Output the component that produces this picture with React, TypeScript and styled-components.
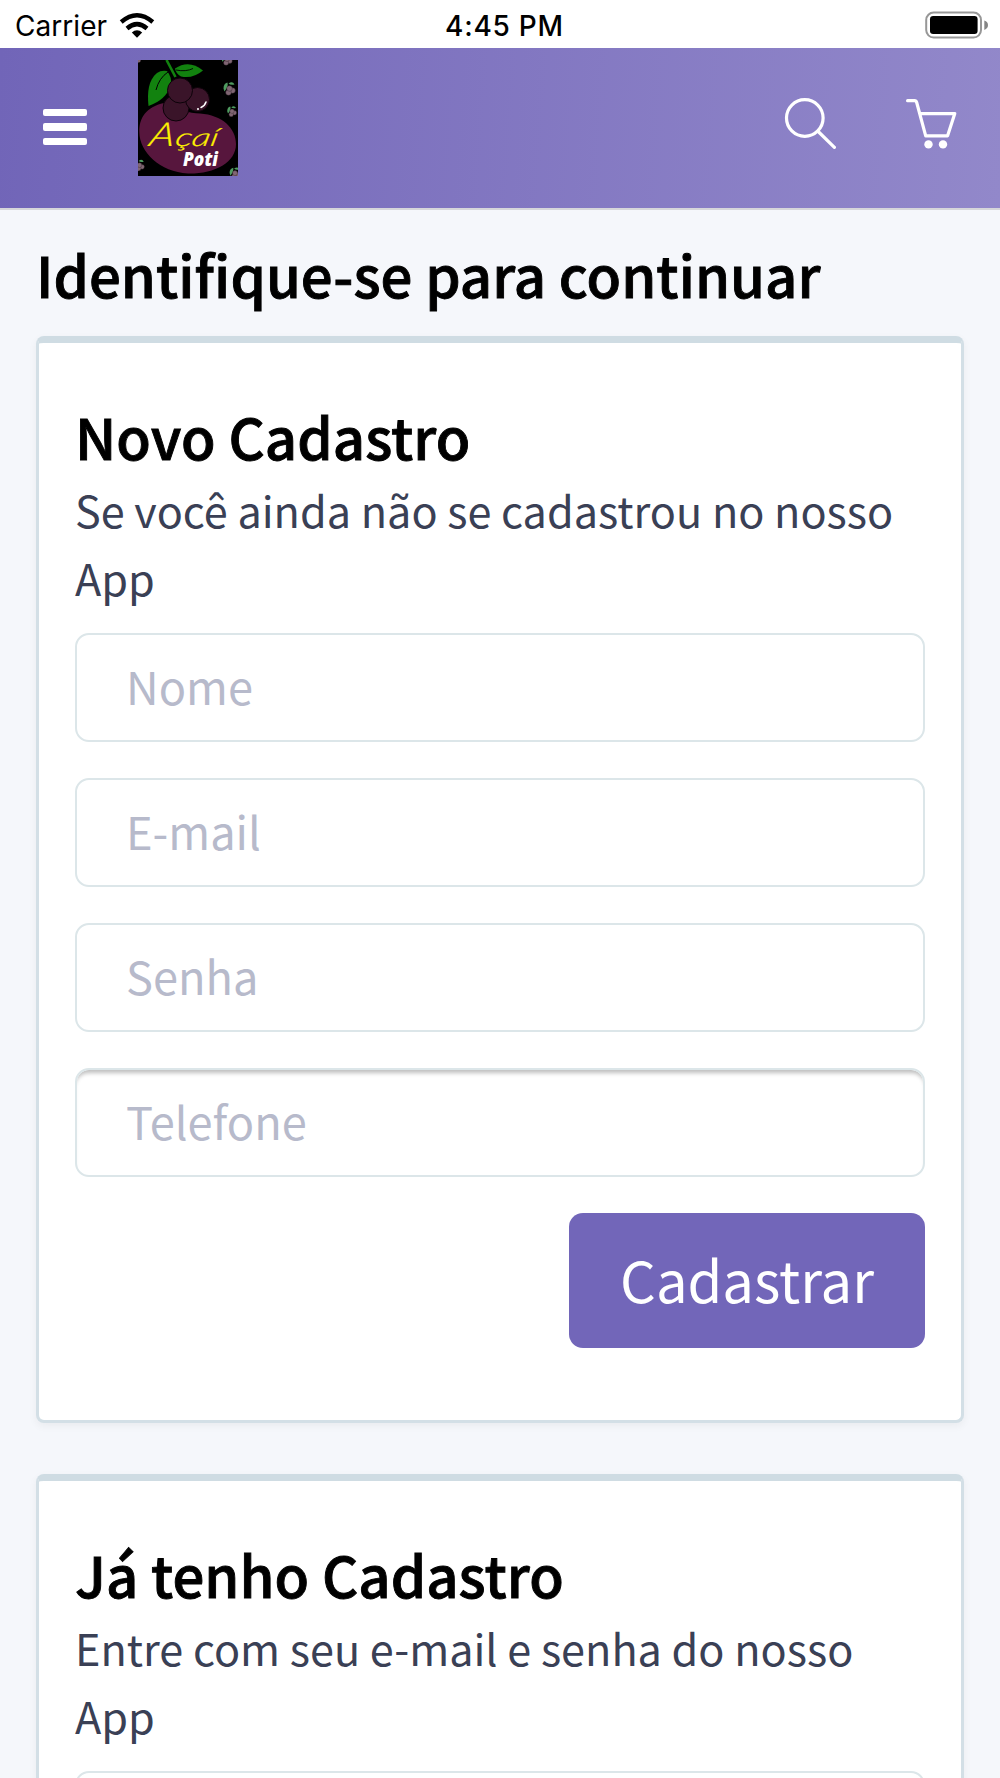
import React from "react";
import styled, { createGlobalStyle } from "styled-components";

const Global = createGlobalStyle`
  * { box-sizing: border-box; }
  html, body { margin: 0; padding: 0; }
  body {
    background: #f5f7fb;
    font-family: "Noto Sans CJK SC", "Source Sans Pro", sans-serif;
    height: 1778px;
    overflow: hidden;
  }
`;

const Screen = styled.div`
  width: 1000px;
  height: 1778px;
  overflow: hidden;
  background: #f5f7fb;
`;

const StatusBar = styled.div`
  display: grid;
  grid-template-columns: 1fr auto 1fr;
  align-items: center;
  height: 48px;
  padding: 0 11px 0 15px;
  background: #fff;
  color: #000;
  font-family: Inter, sans-serif;
  font-size: 28px;
  line-height: 48px;
`;

const Carrier = styled.div`
  display: flex;
  align-items: center;
  gap: 12px;
  padding-top: 1px;
  letter-spacing: 0.05px;
`;

const Clock = styled.div`
  padding: 2px 0 0 5px;
  font-weight: 500;
  letter-spacing: 0.75px;
`;

const BatterySlot = styled.div`
  display: flex;
  justify-content: flex-end;
`;

const Header = styled.header`
  display: flex;
  align-items: flex-start;
  height: 162px;
  padding: 12px 42px 0 43px;
  background: linear-gradient(94deg, #7165b8 0%, #9288ca 100%);
  border-bottom: 2px solid #d6d6da;
`;

const MenuButton = styled.div`
  display: flex;
  flex-direction: column;
  gap: 7px;
  width: 44px;
  margin: 48.5px 51px 0 0;
`;

const MenuLine = styled.span`
  height: 7.6px;
  border-radius: 2px;
  background: #fff;
`;

const HeaderIcons = styled.div`
  display: flex;
  gap: 70px;
  margin: 36.5px 0 0 auto;
`;

const Main = styled.main`
  padding: 30px 36px 0;
`;

const Heading = styled.h1`
  margin: 0;
  color: #000;
  font-size: 56.3px;
  font-weight: 500;
  line-height: 68px;
  white-space: nowrap;
  letter-spacing: 0.04px;
  -webkit-text-stroke: 0.9px #000;
`;

const Card = styled.section<{ $gap: number; $height: number }>`
  height: ${(p) => p.$height}px;
  margin-top: ${(p) => p.$gap}px;
  padding: 59px 36px 0;
  background: #fff;
  border: 3px solid #d3dfe6;
  border-top: 7px solid #cfdce3;
  border-radius: 8px;
  box-shadow: 0 3px 8px rgba(0, 0, 0, 0.05);
`;

const Lead = styled.p`
  margin: 5px 0 22px;
  color: #3a4055;
  font-size: 43.2px;
  line-height: 68px;
`;

const Fields = styled.div`
  display: flex;
  flex-direction: column;
  gap: 36.5px;
`;

const Field = styled.input<{ $inset?: boolean }>`
  width: 100%;
  height: 108.5px;
  padding: 0 50px 3px 49px;
  border: 2px solid #dce6e9;
  border-radius: 14px;
  outline: none;
  background: #fff;
  font-family: inherit;
  font-size: 45.2px;
  box-shadow: ${(p) => (p.$inset ? "inset 0 6px 4px -3px rgba(0,0,0,0.26)" : "none")};
  &::placeholder { color: #b7bacb; opacity: 1; }
`;

const Actions = styled.div`
  display: flex;
  justify-content: flex-end;
  margin-top: 36.5px;
`;

const Submit = styled.button`
  width: 356px;
  height: 135px;
  padding: 0 0 5px;
  border: 0;
  border-radius: 14px;
  background: #7266b9;
  color: #fff;
  font-family: inherit;
  font-size: 56.2px;
`;

const Wifi = () => (
  <svg width="36" height="27" viewBox="120 11 36 27" fill="none" stroke="#000" strokeWidth="4.4">
    <path d="M122.2 21 Q138 7.5 153.8 21" />
    <path d="M128 27.5 Q138 18.8 148 27.5" />
    <path d="M132.8 31.5 Q138 27.2 143.2 31.5 L138 36.7 Z" fill="#000" stroke="none" />
  </svg>
);

const Battery = () => (
  <svg width="64" height="28" viewBox="925 10 64 28">
    <rect x="926.2" y="11.6" width="54.8" height="25" rx="7.5" fill="#fff" stroke="#979797" strokeWidth="2" />
    <rect x="930" y="15" width="47.6" height="18" rx="3.2" fill="#000" />
    <path d="M984.3 19.4 Q988 20.6 988 24.1 Q988 27.8 984.3 28.9 Z" fill="#858585" />
  </svg>
);

const SearchIcon = () => (
  <svg width="52" height="52" viewBox="784 96 52 52" fill="none" stroke="#fff" strokeWidth="3.2" strokeLinecap="round">
    <circle cx="804.8" cy="117" r="18.3" />
    <path d="M818.2 130.5 L834.4 146.3" />
  </svg>
);

const CartIcon = () => (
  <svg width="52" height="52" viewBox="906 96 52 52" fill="none" stroke="#fff" strokeWidth="3.2" strokeLinecap="round" strokeLinejoin="round">
    <path d="M907.6 99.7 H914.5 Q916.2 99.7 916.7 101.5 L925.7 134.8 H947.6 L954.8 112.6 H921" />
    <circle cx="928.5" cy="143.4" r="4.2" fill="#fff" stroke="none" />
    <circle cx="943" cy="143.4" r="4.2" fill="#fff" stroke="none" />
  </svg>
);

const Sprig = ({ x, y, s = 1 }: { x: number; y: number; s?: number }) => (
  <g transform={`translate(${x} ${y}) scale(${s})`}>
    <path d="M-6 -1 Q-6 -6 -2 -7 Q-1 -3 -5 2 Z M-1 -6 Q3 -9 5 -5 Q1 -4 -1 -6 Z" fill="#4f9c60" />
    <g fill="#806673" stroke="#2c1e27" strokeWidth="0.4">
      <circle cx="3" cy="1" r="2.8" />
      <circle cx="-1" cy="3" r="2.8" />
      <circle cx="0" cy="-1" r="2.8" />
    </g>
  </g>
);

const Logo = () => (
  <svg width="100" height="116" viewBox="0 0 100 116">
    <rect width="100" height="116" fill="#000" />
    <Sprig x={89} y={0} s={0.9} />
    <Sprig x={91.5} y={29.5} />
    <Sprig x={94} y={52} s={0.8} />
    <Sprig x={1.5} y={106} s={0.85} />
    <Sprig x={97} y={114} s={0.9} />
    <circle cx="0.8" cy="0.8" r="1.8" fill="#806673" />
    <path d="M1.3 72 C1 58 8 47 26 43 C38 50 52 53 62 53.5 C84 55 98 68 98 84 C98 103 76 114 50 113.5 C22 112 1.5 92 1.3 72 Z" fill="#57163d" />
    <path d="M10.5 46 C9 32 10.5 20 19 13 Q23 10 29 11 Q34 17 33 25 Q28 40 10.5 46 Z" fill="#12820f" />
    <path d="M18 30 Q21 18 30 12" fill="none" stroke="#000" strokeWidth="1" />
    <path d="M37 8.5 Q51 -1 65 10.5 Q55 19 43 16.5 Q38 14 37 8.5 Z" fill="#12820f" />
    <path d="M38 10 Q48 12 55 8.5" fill="none" stroke="#000" strokeWidth="0.9" />
    <path d="M28.5 0 L37.5 17" stroke="#12820f" strokeWidth="2.6" />
    <g fill="#3a1429" stroke="#0c0209" strokeWidth="1">
      <circle cx="38" cy="48" r="13" />
      <circle cx="59.5" cy="39.5" r="12" />
      <circle cx="42" cy="30.5" r="12.5" />
    </g>
    <path d="M63 47.5 Q67 45.5 68 42" fill="none" stroke="#fff" strokeWidth="1.5" strokeLinecap="round" />
    <circle cx="60" cy="49" r="1" fill="#fff" />
    <text y="86.5" transform="translate(17 0) skewX(-11)" fill="#fff200" stroke="#fff200" strokeWidth="0.25" fontFamily="Lato, sans-serif" fontStyle="italic" fontWeight="300">
      <tspan x="10" fontSize="33" textLength="25" lengthAdjust="spacingAndGlyphs">A</tspan>
      <tspan x="36" fontSize="25" textLength="43" lengthAdjust="spacingAndGlyphs">çaí</tspan>
    </text>
    <text x="45" y="105.5" textLength="35" lengthAdjust="spacingAndGlyphs" fill="#fff" fontFamily="'Open Sans', sans-serif" fontStyle="italic" fontWeight="800" fontSize="19">Poti</text>
  </svg>
);

export default function App() {
  return (
    <Screen>
      <Global />
      <StatusBar>
        <Carrier><span>Carrier</span><Wifi /></Carrier>
        <Clock>4:45 PM</Clock>
        <BatterySlot><Battery /></BatterySlot>
      </StatusBar>
      <Header>
        <MenuButton><MenuLine /><MenuLine /><MenuLine /></MenuButton>
        <Logo />
        <HeaderIcons><SearchIcon /><CartIcon /></HeaderIcons>
      </Header>
      <Main>
        <Heading>Identifique-se para continuar</Heading>
        <Card $gap={28} $height={1086.5}>
          <Heading as="h2">Novo Cadastro</Heading>
          <Lead>Se você ainda não se cadastrou no nosso App</Lead>
          <Fields>
            <Field placeholder="Nome" />
            <Field placeholder="E-mail" />
            <Field placeholder="Senha" />
            <Field placeholder="Telefone" $inset />
          </Fields>
          <Actions><Submit>Cadastrar</Submit></Actions>
        </Card>
        <Card $gap={51} $height={700}>
          <Heading as="h2">Já tenho Cadastro</Heading>
          <Lead>Entre com seu e-mail e senha do nosso App</Lead>
          <Fields>
            <Field placeholder="E-mail" />
            <Field placeholder="Senha" />
          </Fields>
        </Card>
      </Main>
    </Screen>
  );
}
